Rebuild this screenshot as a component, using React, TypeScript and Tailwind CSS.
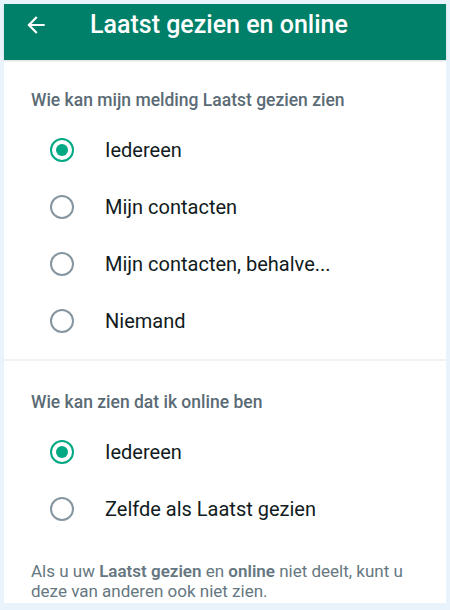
import React from 'react';

const Radio = ({ checked }: { checked: boolean }) =>
  checked ? (
    <span className="flex h-[24px] w-[24px] items-center justify-center rounded-full border-2 border-[#00a884]">
      <span className="h-[12px] w-[12px] rounded-full bg-[#00a884]" />
    </span>
  ) : (
    <span className="h-[24px] w-[24px] rounded-full border-2 border-[#8696a0]" />
  );

const Option = ({ label, checked = false }: { label: string; checked?: boolean }) => (
  <div className="flex h-[57px] items-center pl-[46px]">
    <Radio checked={checked} />
    <span className="ml-[31px] text-[20px] text-[#111b21]">{label}</span>
  </div>
);

const App = () => {
  return (
    <div
      className="h-[610px] w-[450px] bg-[#e9f3fb] px-1 pt-1 pb-[7px]"
      style={{ fontFamily: 'Roboto, "Noto Sans", sans-serif' }}
    >
      <div className="flex h-full flex-col bg-white">
        <header className="flex h-[56px] items-center bg-[#008069] pb-[14px] shadow-[0_1px_2px_rgba(0,0,0,0.15)]">
          <svg width="26" height="26" viewBox="0 0 24 24" className="ml-[19px] fill-white">
            <path d="M20 11H7.83l5.59-5.59L12 4l-8 8 8 8 1.41-1.41L7.83 13H20v-2z" />
          </svg>
          <h1 className="ml-[41px] text-[25px] leading-[30px] font-medium text-white">
            Laatst gezien en online
          </h1>
        </header>

        <section className="pt-[30px]">
          <h2 className="pl-[27px] text-[17.5px] leading-[20px] font-medium text-[#5b6b75]">
            Wie kan mijn melding Laatst gezien zien
          </h2>
          <div className="mt-[11px]">
            <Option label="Iedereen" checked />
            <Option label="Mijn contacten" />
            <Option label="Mijn contacten, behalve..." />
            <Option label="Niemand" />
          </div>
        </section>

        <div className="mt-[10px] h-[2px] bg-[#f2f2f2]" />

        <section className="pt-[31px]">
          <h2 className="pl-[27px] text-[17.5px] leading-[20px] font-medium text-[#5b6b75]">
            Wie kan zien dat ik online ben
          </h2>
          <div className="mt-[11px]">
            <Option label="Iedereen" checked />
            <Option label="Zelfde als Laatst gezien" />
          </div>
          <p className="mt-[24px] pr-[12px] pl-[27px] text-[17px] leading-[20px] text-[#667781]">
            Als u uw <span className="font-semibold">Laatst gezien</span> en{' '}
            <span className="font-semibold">online</span> niet deelt, kunt u deze van anderen ook niet
            zien.
          </p>
        </section>
      </div>
    </div>
  );
};

export default App;
